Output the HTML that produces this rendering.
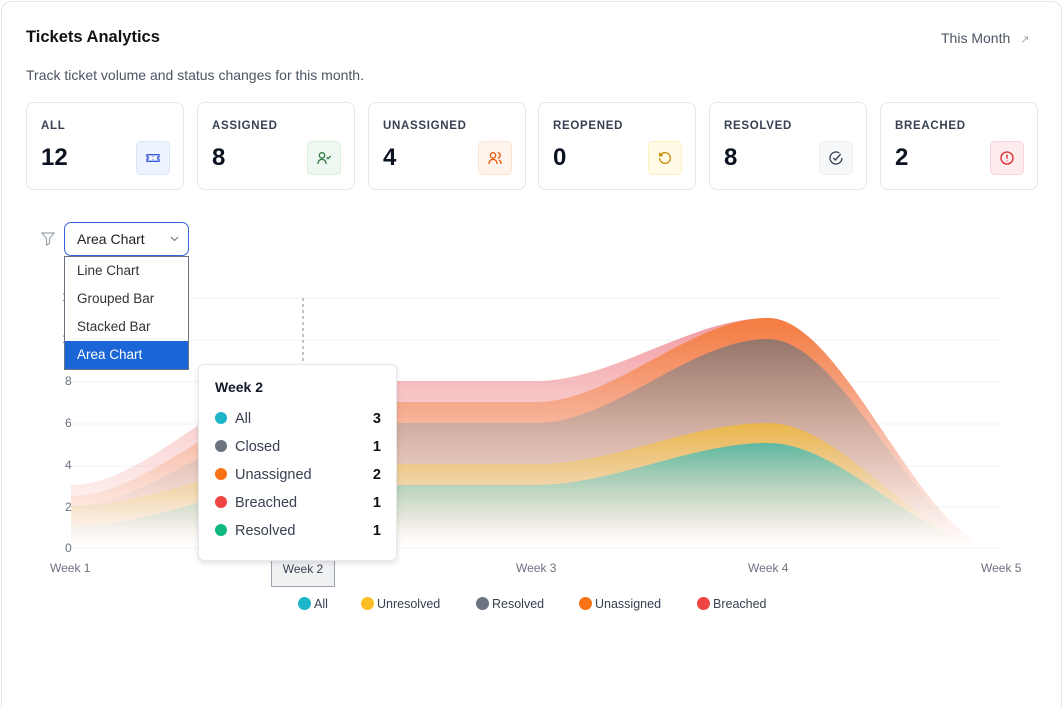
<!DOCTYPE html>
<html><head><meta charset="utf-8"><style>
*{box-sizing:border-box;margin:0;padding:0}
html{width:1063px;height:708px;overflow:hidden}
body{width:1063px;height:708px;background:#fff;font-family:"Liberation Sans",sans-serif;position:relative;overflow:hidden;color:#111827}
.frame{position:absolute;left:1px;top:1px;width:1061px;height:707px;border:1px solid #e5e7eb;border-bottom:none;border-radius:10px 10px 0 0}
.title{position:absolute;left:26px;top:28px;font-size:16.5px;font-weight:bold;color:#111}
.sub{position:absolute;left:26px;top:67px;font-size:14px;color:#4b5563}
.month{position:absolute;left:941px;top:30px;font-size:14px;color:#4b5563}
.month span{font-size:11px;margin-left:10px;color:#9ca3af}
.card{position:absolute;top:102px;width:158px;height:88px;border:1px solid #e5e7eb;border-radius:8px}
.card .l{position:absolute;left:14px;top:17px;font-size:11.5px;font-weight:bold;letter-spacing:.7px;color:#374151}
.card .n{position:absolute;left:14px;top:41px;font-size:24px;font-weight:bold;color:#0b1220}
.card .ic{position:absolute;left:109px;top:38px;width:34px;height:34px;border-radius:5px;border:1px solid;display:flex;align-items:center;justify-content:center}
.dd{position:absolute;left:64px;top:222px;width:125px;height:34px;border:1px solid #3b63d8;border-radius:7px;font-size:14px;padding:8px 12px;color:#222}
.list{position:absolute;left:64px;top:256px;width:125px;height:114px;border:1px solid #6b7280;background:#fff;font-size:13.5px}
.list div{height:28px;line-height:28px;padding-left:12px;color:#333}
.list .sel{background:#1a66d6;color:#fff}
.ax{position:absolute;font-size:12px;color:#6b7280}
.tip{position:absolute;left:198px;top:364px;width:199px;height:197px;background:#fff;border:1px solid #e5e7eb;border-radius:6px;box-shadow:0 2px 6px rgba(0,0,0,.12)}
.tip h4{position:absolute;left:16px;top:14px;font-size:14px}
.row{position:absolute;left:16px;width:166px;font-size:14.5px;color:#374151}
.row i{display:inline-block;width:12px;height:12px;border-radius:50%;vertical-align:-1px;margin-right:8px}
.row b{position:absolute;right:0;color:#111}
.leg{position:absolute;top:597px;font-size:12.5px;color:#374151}
.leg i{display:inline-block;width:13px;height:13px;border-radius:50%;vertical-align:-2px;margin-right:3px}
</style></head><body>
<div class="frame"></div>
<div class="title">Tickets Analytics</div>
<div class="sub">Track ticket volume and status changes for this month.</div>
<div class="month">This Month<span>↗</span></div>

<div class="card" style="left:26px"><div class="l">ALL</div><div class="n">12</div><div class="ic" style="background:#eef4ff;border-color:#dbe5fb"><svg width="16" height="16" viewBox="0 0 24 24" fill="none" stroke="#3b5bdb" stroke-width="2"><path d="M3 7h18v3a2 2 0 0 0 0 4v3H3v-3a2 2 0 0 0 0-4z"/><path d="M12 9v1M12 14v1"/></svg></div></div>
<div class="card" style="left:197px"><div class="l">ASSIGNED</div><div class="n">8</div><div class="ic" style="background:#eef8f0;border-color:#d7eedc"><svg width="16" height="16" viewBox="0 0 24 24" fill="none" stroke="#2f7d46" stroke-width="2"><circle cx="9" cy="8" r="4"/><path d="M3 21v-1a6 6 0 0 1 12 0v1M16 11l2 2 4-4"/></svg></div></div>
<div class="card" style="left:368px"><div class="l">UNASSIGNED</div><div class="n">4</div><div class="ic" style="background:#fff4ec;border-color:#fde3d0"><svg width="16" height="16" viewBox="0 0 24 24" fill="none" stroke="#ea580c" stroke-width="2"><circle cx="9" cy="8" r="4"/><path d="M3 21v-1a6 6 0 0 1 12 0v1M16 4a4 4 0 0 1 0 8M21 21v-1a6 6 0 0 0-3-5"/></svg></div></div>
<div class="card" style="left:538px"><div class="l">REOPENED</div><div class="n">0</div><div class="ic" style="background:#fffbe6;border-color:#fbf0c0"><svg width="16" height="16" viewBox="0 0 24 24" fill="none" stroke="#ca8a04" stroke-width="2"><path d="M4 12a8 8 0 1 0 2.5-5.8L4 8.5M4 4v4.5h4.5"/></svg></div></div>
<div class="card" style="left:709px"><div class="l">RESOLVED</div><div class="n">8</div><div class="ic" style="background:#f7f8fa;border-color:#eceef2"><svg width="16" height="16" viewBox="0 0 24 24" fill="none" stroke="#374151" stroke-width="2"><path d="M21 12a9 9 0 1 1-4-7.5"/><path d="M8 12l3 3 8-9"/></svg></div></div>
<div class="card" style="left:880px"><div class="l">BREACHED</div><div class="n">2</div><div class="ic" style="background:#fdecee;border-color:#f9d4d8"><svg width="16" height="16" viewBox="0 0 24 24" fill="none" stroke="#dc2626" stroke-width="2"><circle cx="12" cy="12" r="9"/><path d="M12 7v6M12 16v1"/></svg></div></div>

<svg style="position:absolute;left:0;top:0" width="1063" height="708">
<defs>
<linearGradient id="gp" gradientUnits="userSpaceOnUse" x1="0" y1="318" x2="0" y2="548"><stop offset="0" stop-color="#ef8f98" stop-opacity=".9"/><stop offset="1" stop-color="#f6b3a8" stop-opacity="0"/></linearGradient>
<linearGradient id="go" gradientUnits="userSpaceOnUse" x1="0" y1="318" x2="0" y2="548"><stop offset="0" stop-color="#f47a3a" stop-opacity=".95"/><stop offset="1" stop-color="#f9c0a0" stop-opacity="0"/></linearGradient>
<linearGradient id="gb" gradientUnits="userSpaceOnUse" x1="0" y1="339" x2="0" y2="548"><stop offset="0" stop-color="#94756a"/><stop offset=".7" stop-color="#e5cfc8" stop-opacity=".6"/><stop offset="1" stop-color="#fff" stop-opacity="0"/></linearGradient>
<linearGradient id="gy" gradientUnits="userSpaceOnUse" x1="0" y1="423" x2="0" y2="548"><stop offset="0" stop-color="#ebb64a"/><stop offset=".6" stop-color="#f4dca8" stop-opacity=".6"/><stop offset="1" stop-color="#fff" stop-opacity="0"/></linearGradient>
<linearGradient id="gg" gradientUnits="userSpaceOnUse" x1="0" y1="443" x2="0" y2="548"><stop offset="0" stop-color="#5cb8a2"/><stop offset=".7" stop-color="#d6e5dc" stop-opacity=".6"/><stop offset="1" stop-color="#fff" stop-opacity="0"/></linearGradient>
</defs>
<g stroke="#f1f3f6" stroke-width="1">
<line x1="71" y1="298" x2="1000" y2="298"/><line x1="71" y1="340" x2="1000" y2="340"/><line x1="71" y1="382" x2="1000" y2="382"/><line x1="71" y1="424" x2="1000" y2="424"/><line x1="71" y1="466" x2="1000" y2="466"/><line x1="71" y1="507" x2="1000" y2="507"/><line x1="71" y1="548" x2="1000" y2="548"/>
</g>
<path fill="url(#gp)" d="M71,485 C148,485 226,381 303,381 C380,381 459,381 536,381 C613,381 691,318 768,318 C845,318 923,548 1000,548 L71,548Z"/>
<path fill="url(#go)" d="M71,496 C148,496 226,402 303,402 C380,402 459,402 536,402 C613,402 691,318 768,318 C845,318 923,548 1000,548 L71,548Z"/>
<path fill="url(#gb)" d="M71,506 C148,506 226,423 303,423 C380,423 459,423 536,423 C613,423 691,339 768,339 C845,339 923,548 1000,548 L71,548Z"/>
<path fill="url(#gy)" d="M71,506 C148,506 226,464 303,464 C380,464 459,464 536,464 C613,464 691,423 768,423 C845,423 923,548 1000,548 L71,548Z"/>
<path fill="url(#gg)" d="M71,527 C148,527 226,485 303,485 C380,485 459,485 536,485 C613,485 691,443 768,443 C845,443 923,548 1000,548 L71,548Z"/>
<line x1="303" y1="298" x2="303" y2="548" stroke="#888" stroke-dasharray="3 3"/>
<path d="M42 233h12l-4.5 5.5v5l-3 1.5v-6.5z" fill="none" stroke="#9ca3af" stroke-width="1.2"/>
</svg>

<div class="ax" style="left:62px;top:290px">1</div>
<div class="ax" style="left:62px;top:332px">1</div>
<div class="ax" style="left:65px;top:374px">8</div>
<div class="ax" style="left:65px;top:416px">6</div>
<div class="ax" style="left:65px;top:458px">4</div>
<div class="ax" style="left:65px;top:500px">2</div>
<div class="ax" style="left:65px;top:541px">0</div>
<div class="ax" style="left:50px;top:561px">Week 1</div>
<div class="ax" style="left:271px;top:558px;width:64px;height:29px;border:1px solid #9ca3af;background:#f0f1f3;text-align:center;padding-top:3px;color:#374151">Week 2</div>
<div class="ax" style="left:516px;top:561px">Week 3</div>
<div class="ax" style="left:748px;top:561px">Week 4</div>
<div class="ax" style="left:981px;top:561px">Week 5</div>

<div class="dd">Area Chart<svg style="position:absolute;right:9px;top:13px" width="9" height="6" viewBox="0 0 9 6"><path d="M1 1l3.5 3.5L8 1" fill="none" stroke="#6b7280" stroke-width="1.1"/></svg></div>
<div class="list"><div>Line Chart</div><div>Grouped Bar</div><div>Stacked Bar</div><div class="sel">Area Chart</div></div>

<div class="tip"><h4>Week 2</h4>
<div class="row" style="top:46px"><i style="background:#1fb5c9"></i>All<b>3</b></div>
<div class="row" style="top:74px"><i style="background:#6b7280"></i>Closed<b>1</b></div>
<div class="row" style="top:102px"><i style="background:#f97316"></i>Unassigned<b>2</b></div>
<div class="row" style="top:130px"><i style="background:#ef4444"></i>Breached<b>1</b></div>
<div class="row" style="top:158px"><i style="background:#10b981"></i>Resolved<b>1</b></div>
</div>

<div class="leg" style="left:298px"><i style="background:#1fb5c9"></i>All</div>
<div class="leg" style="left:361px"><i style="background:#fbbf24"></i>Unresolved</div>
<div class="leg" style="left:476px"><i style="background:#6b7280"></i>Resolved</div>
<div class="leg" style="left:579px"><i style="background:#f97316"></i>Unassigned</div>
<div class="leg" style="left:697px"><i style="background:#ef4444"></i>Breached</div>
</body></html>
